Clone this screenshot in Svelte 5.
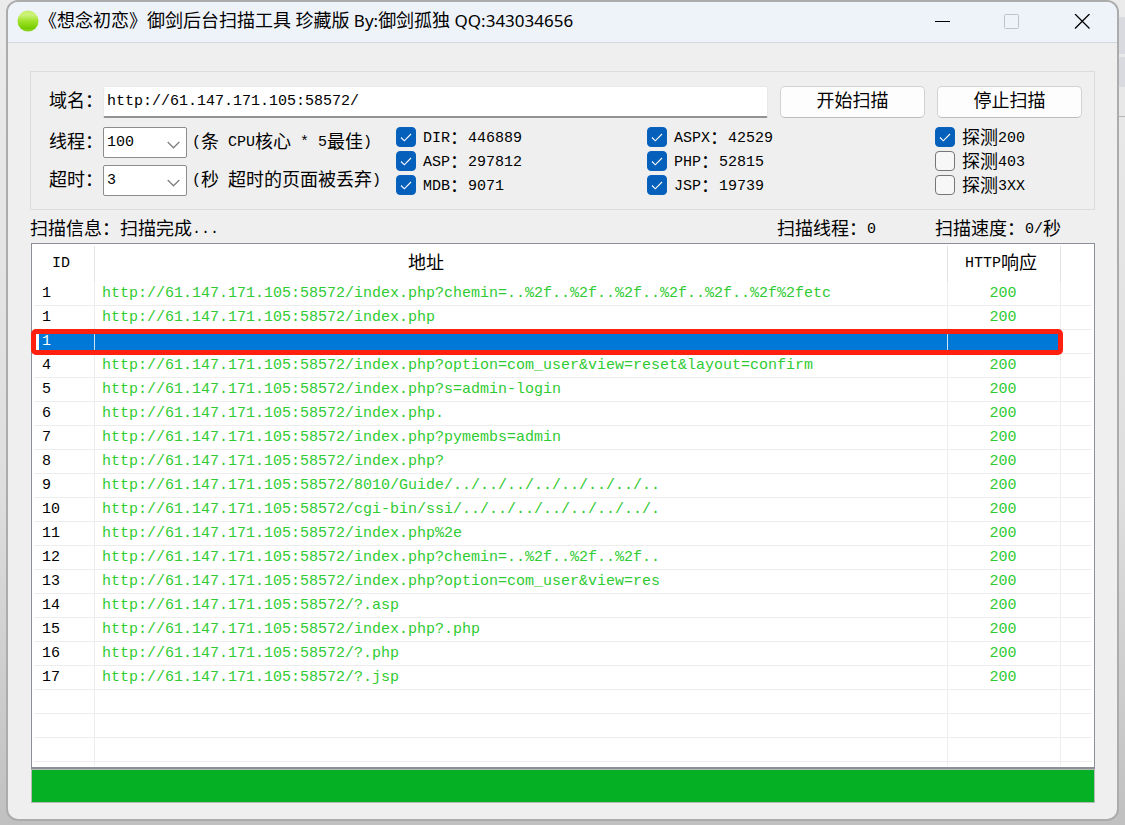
<script>
  const title = '《想念初恋》御剑后台扫描工具 珍藏版 By:御剑孤独 QQ:343034656';

  let domain = $state('http://61.147.171.105:58572/');
  let threads = $state('100');
  let timeout = $state('3');

  const groups = $state([
    [
      { text: 'DIR：446889', on: true },
      { text: 'ASP：297812', on: true },
      { text: 'MDB：9071', on: true },
    ],
    [
      { text: 'ASPX：42529', on: true },
      { text: 'PHP：52815', on: true },
      { text: 'JSP：19739', on: true },
    ],
    [
      { text: '探测200', on: true },
      { text: '探测403', on: false },
      { text: '探测3XX', on: false },
    ],
  ]);

  const host = 'http://61.147.171.105:58572/';
  const rows = [
    { id: '1', path: 'index.php?chemin=..%2f..%2f..%2f..%2f..%2f..%2f%2fetc' },
    { id: '1', path: 'index.php' },
    { id: '1', selected: true },
    { id: '4', path: 'index.php?option=com_user&view=reset&layout=confirm' },
    { id: '5', path: 'index.php?s=admin-login' },
    { id: '6', path: 'index.php.' },
    { id: '7', path: 'index.php?pymembs=admin' },
    { id: '8', path: 'index.php?' },
    { id: '9', path: '8010/Guide/../../../../../../../..' },
    { id: '10', path: 'cgi-bin/ssi/../../../../../../../.' },
    { id: '11', path: 'index.php%2e' },
    { id: '12', path: 'index.php?chemin=..%2f..%2f..%2f..' },
    { id: '13', path: 'index.php?option=com_user&view=res' },
    { id: '14', path: '?.asp' },
    { id: '15', path: 'index.php?.php' },
    { id: '16', path: '?.php' },
    { id: '17', path: '?.jsp' },
  ];

  // Splits a label into Latin and Han runs, so that one Han glyph is two cells wide.
  function runs(text) {
    return text.match(/[\u3000-\uffff]+|[^\u3000-\uffff]+/g).map((t) => ({ t, han: t.charCodeAt(0) >= 0x3000 }));
  }
</script>

{#snippet mixed(text)}{#each runs(text) as r}<span class:han={r.han}>{r.t}</span>{/each}{/snippet}

<div class="window">
  <header>
    <svg class="orb" width="22" height="22" viewBox="0 0 22 22" aria-hidden="true">
      <defs>
        <linearGradient id="orb" x1="0" y1="0" x2="0" y2="1">
          <stop offset="0" stop-color="#c4f060" />
          <stop offset="0.2" stop-color="#cdf27c" />
          <stop offset="0.5" stop-color="#a0e22a" />
          <stop offset="0.85" stop-color="#78cc00" />
          <stop offset="1" stop-color="#8fd62c" />
        </linearGradient>
      </defs>
      <circle cx="11" cy="11" r="10.5" fill="url(#orb)" />
    </svg>
    <h1>{@render mixed(title)}</h1>
    <div class="controls">
      <button aria-label="最小化"><svg width="16" height="16" viewBox="0 0 16 16"><path d="M1 7.5H16" stroke="#000" /></svg></button>
      <button aria-label="最大化" disabled><svg width="16" height="16" viewBox="0 0 16 16"><rect x="0.5" y="0.5" width="14" height="14" rx="1" fill="none" stroke="#bfc3c8" /></svg></button>
      <button aria-label="关闭"><svg width="16" height="16" viewBox="0 0 16 16"><path d="M1 0L15.500 14.500M15.500 0L1 14.500" stroke="#000" stroke-width="1.3" /></svg></button>
    </div>
  </header>

  <main>
    <section class="panel">
      <div class="target">
        <label for="domain">{@render mixed('域名：')}</label>
        <input id="domain" type="text" bind:value={domain} />
        <button class="push">{@render mixed('开始扫描')}</button>
        <button class="push">{@render mixed('停止扫描')}</button>
      </div>
      <div class="options">
        <div class="limits">
          <div class="limit">
            <label for="threads">{@render mixed('线程：')}</label>
            <select id="threads" bind:value={threads}><option>100</option></select>
            <span>{@render mixed('(条 CPU核心 * 5最佳)')}</span>
          </div>
          <div class="limit">
            <label for="timeout">{@render mixed('超时：')}</label>
            <select id="timeout" bind:value={timeout}><option>3</option></select>
            <span>{@render mixed('(秒 超时的页面被丢弃)')}</span>
          </div>
        </div>
        {#each groups as group}
          <div class="checks">
            {#each group as item}
              <label><input type="checkbox" bind:checked={item.on} /><span>{@render mixed(item.text)}</span></label>
            {/each}
          </div>
        {/each}
      </div>
    </section>

    <div class="status">
      <span>{@render mixed('扫描信息：扫描完成...')}</span>
      <span>{@render mixed('扫描线程：0')}</span>
      <span>{@render mixed('扫描速度：0/秒')}</span>
    </div>

    <div class="list">
      <table>
        <colgroup><col class="c-id" /><col /><col class="c-code" /><col class="c-rest" /></colgroup>
        <thead>
          <tr><th>ID</th><th class="address">{@render mixed('地址')}</th><th>{@render mixed('HTTP响应')}</th><th></th></tr>
        </thead>
        <tbody>
          {#each rows as row}
            <tr class:selected={row.selected}>
              <td>{row.id}</td>
              <td class="url">{row.path ? host + row.path : ''}</td>
              <td class="code">{row.path ? '200' : ''}</td>
              <td></td>
            </tr>
          {/each}
          {#each [1, 2, 3] as _}
            <tr><td></td><td></td><td></td><td></td></tr>
          {/each}
          <tr class="cut"><td></td><td></td><td></td><td></td></tr>
        </tbody>
      </table>
    </div>

    <div class="progress" role="progressbar" aria-label="扫描进度" aria-valuenow="100"></div>
  </main>
</div>

<style>
  :global(body) {
    margin: 0;
    background:
      linear-gradient(transparent 17px, #d9dae0 17px 54px, transparent 54px 57px, #d9dae0 57px 87px, transparent 87px 116px, #b4b4b4 116px 117px, transparent 117px) right top / 6px 120px no-repeat,
      linear-gradient(#ebebeb, #dedede 60%, #c0c0c0);
  }
  .window {
    box-sizing: border-box;
    margin: 0 6px 6px;
    border: 2px solid #acacac;
    border-radius: 12px;
    overflow: hidden;
    background: #efefef;
    color: #000;
    font: 15px/24px 'Liberation Mono', 'Noto Sans CJK SC', monospace;
  }
  .han {
    font-family: 'Noto Sans CJK SC', sans-serif;
    font-size: 18px;
    line-height: 1;
    vertical-align: -2px;
  }
  button, input, select {
    font: inherit;
    color: inherit;
    margin: 0;
  }
  header {
    display: flex;
    align-items: center;
    height: 40px;
    padding-left: 9px;
    background: #eef3f9;
    border-bottom: 1px solid #d5d8dc;
  }
  h1 {
    flex: 1;
    margin: 0;
    padding-bottom: 3px;
    font: 17px/24px 'Noto Sans', 'Noto Sans CJK SC', sans-serif;
    white-space: pre;
  }
  h1 .han {
    vertical-align: baseline;
  }
  .orb {
    margin-bottom: 2px;
  }
  .controls {
    display: flex;
  }
  .controls button {
    display: grid;
    place-items: center;
    width: 70px;
    height: 40px;
    padding: 0;
    border: 0;
    background: none;
  }
  main {
    padding: 28px 22px 16px;
  }
  .panel {
    padding: 14px 12px 10px 18px;
    border: 1px solid #dcdcdc;
  }
  .target {
    display: flex;
    align-items: center;
  }
  .target label, .limit label {
    flex: none;
    width: 54px;
  }
  .target input {
    box-sizing: border-box;
    flex: 1;
    min-width: 0;
    height: 32px;
    padding: 0 3px;
    border: 1px solid #e8e8e8;
    border-bottom: 2px solid #929292;
    border-radius: 2px;
    background: #fff;
    outline: 0;
  }
  .push {
    width: 145px;
    height: 32px;
    margin-left: 12px;
    padding: 0;
    border: 1px solid #d2d2d2;
    border-bottom-color: #bcbcbc;
    border-radius: 5px;
    background: #fdfdfd;
  }
  .options {
    display: grid;
    grid-template-columns: 347fr 251fr 288fr 147fr;
    margin-top: 9px;
    white-space: pre;
  }
  .limits {
    display: grid;
    gap: 7px;
    align-content: start;
  }
  .limit {
    display: flex;
    align-items: center;
  }
  .limit select {
    box-sizing: border-box;
    width: 84px;
    height: 31px;
    margin-right: 5px;
    padding: 0 3px;
    border: 1px solid #8c8c8c;
    border-radius: 2px;
    appearance: none;
    background: #fff url("data:image/svg+xml,%3Csvg xmlns='http://www.w3.org/2000/svg' width='13' height='8' fill='none' stroke='gray' stroke-width='1.3'%3E%3Cpath d='M.7 1l5.8 5.8L12.300 1'/%3E%3C/svg%3E") no-repeat right 6px top 13px;
  }
  .checks {
    display: flex;
    flex-direction: column;
  }
  .checks label {
    display: flex;
    align-items: center;
    gap: 7px;
    height: 24px;
    margin-top: -2px;
    margin-bottom: 2px;
  }
  .checks span {
    line-height: 25px;
  }
  .checks input {
    box-sizing: border-box;
    flex: none;
    width: 20px;
    height: 20px;
    border: 1px solid #767676;
    border-radius: 4px;
    appearance: none;
    background: #f7f7f7;
  }
  .checks input:checked {
    border-color: #0a62bd;
    background: #0560bb url("data:image/svg+xml,%3Csvg xmlns='http://www.w3.org/2000/svg' width='12' height='9' fill='none' stroke='white' stroke-width='1.100'%3E%3Cpath d='M1 4.500l3.300 3.300L11 1'/%3E%3C/svg%3E") no-repeat center;
  }
  .status {
    display: grid;
    grid-template-columns: 747fr 158fr 160fr;
    padding: 8px 0 1px;
    white-space: pre;
  }
  .list {
    box-sizing: border-box;
    border: 2px solid #8a8f98;
    border-width: 1px 1px 2px;
    padding: 2px 2px 1px;
    margin-left: 1px;
    background: #fff;
  }
  table {
    width: 100%;
    table-layout: fixed;
    border-collapse: separate;
    border-spacing: 0;
  }
  .c-id { width: 61px; }
  .c-code { width: 113px; }
  .c-rest { width: 31px; }
  th {
    box-sizing: border-box;
    height: 36px;
    padding: 0 6px 0 0;
    font-weight: 400;
    border-right: 1px solid #e3e3e3;
  }
  th:last-child { border-right: 0; }
  th.address { padding-right: 190px; }
  td {
    box-sizing: border-box;
    height: 24px;
    padding: 0 0 0 8px;
    line-height: 23px;
    border-right: 1px solid #ededed;
    border-bottom: 1px solid #ededed;
    white-space: nowrap;
  }
  td:last-child { border-right: 0; }
  .url, .code { color: #2fcb32; }
  .url { padding-left: 7px; }
  .code {
    padding: 0 2px 0 0;
    text-align: center;
  }
  .cut td {
    height: 4px;
    border-bottom: 0;
    line-height: 0;
  }
  .selected {
    position: relative;
  }
  .selected td:not(:last-child) {
    background: #0078d7;
    color: #fff;
    border-right-color: #cfe4f7;
  }
  .selected td:first-child {
    background: linear-gradient(90deg, #fff 5px, #0078d7 5px);
  }
  .selected td:first-child::after {
    content: '';
    position: absolute;
    inset: -1px 29px -1px -3px;
    border: 5px solid #ff2010;
    border-radius: 5px;
  }
  .progress {
    box-sizing: border-box;
    height: 34px;
    margin-left: 1px;
    border: 1px solid #b4bcb4;
    background: #06b025;
  }
</style>
